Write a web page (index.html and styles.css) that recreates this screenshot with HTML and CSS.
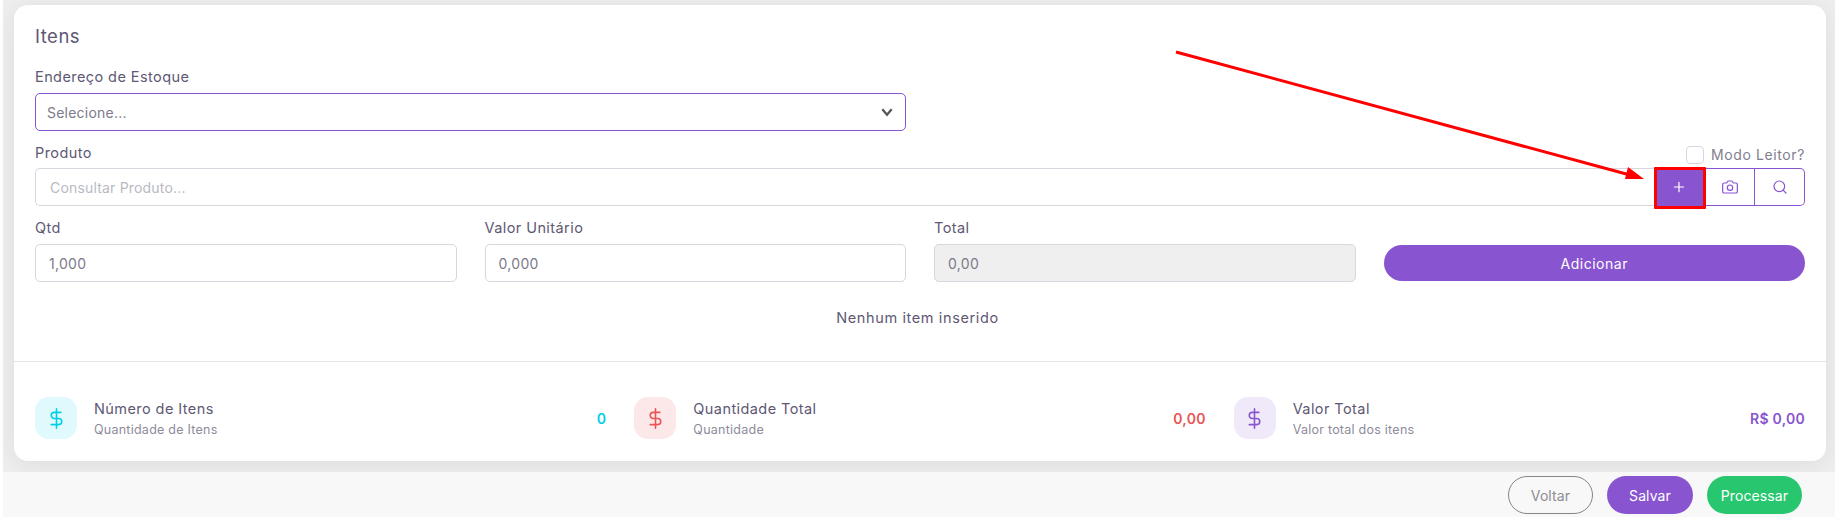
FILE: index.html
```html
<!DOCTYPE html>
<html lang="pt-BR">
<head>
<meta charset="utf-8">
<title>Itens</title>
<link rel="stylesheet" href="styles.css">
</head>
<body>
<main class="main">
  <section class="card">
    <div class="form">
      <h2 class="title">Itens</h2>
      <label class="label">Endereço de Estoque</label>
      <div class="select-row">
        <div class="control select">
          <span>Selecione...</span>
          <svg class="chev" viewBox="0 0 24 24"><path d="M5 8l7 8 7-8"/></svg>
        </div>
      </div>
      <div class="product-head">
        <label class="label">Produto</label>
        <div class="reader"><span class="check"></span><span>Modo Leitor?</span></div>
      </div>
      <div class="product">
        <div class="product-input">Consultar Produto...</div>
        <button class="pbtn plus"><svg class="ico" viewBox="0 0 24 24"><path d="M12 5v14M5 12h14"/></svg></button>
        <button class="pbtn"><svg class="ico" viewBox="0 0 24 24"><path d="M23 19a2 2 0 0 1-2 2H3a2 2 0 0 1-2-2V8a2 2 0 0 1 2-2h4l2-3h6l2 3h4a2 2 0 0 1 2 2z"/><circle cx="12" cy="13" r="4"/></svg></button>
        <button class="pbtn"><svg class="ico" viewBox="0 0 24 24"><circle cx="11" cy="11" r="8"/><path d="M21 21l-4.35-4.35"/></svg></button>
      </div>
      <div class="row">
        <div class="field"><label class="label">Qtd</label><div class="control">1,000</div></div>
        <div class="field"><label class="label">Valor Unitário</label><div class="control">0,000</div></div>
        <div class="field"><label class="label">Total</label><div class="control disabled">0,00</div></div>
        <div class="field end"><button class="add">Adicionar</button></div>
      </div>
      <p class="empty">Nenhum item inserido</p>
    </div>
    <div class="stats">
      <div class="stat">
        <span class="badge cyan"><svg class="ico big" viewBox="0 0 24 24"><path d="M12 1v22M17 5H9.5a3.5 3.5 0 0 0 0 7h5a3.5 3.5 0 0 1 0 7H6"/></svg></span>
        <div class="stat-text"><div class="stat-title">Número de Itens</div><div class="stat-sub">Quantidade de Itens</div></div>
        <strong class="value c-cyan">0</strong>
      </div>
      <div class="stat">
        <span class="badge red"><svg class="ico big" viewBox="0 0 24 24"><path d="M12 1v22M17 5H9.5a3.5 3.5 0 0 0 0 7h5a3.5 3.5 0 0 1 0 7H6"/></svg></span>
        <div class="stat-text"><div class="stat-title">Quantidade Total</div><div class="stat-sub">Quantidade</div></div>
        <strong class="value c-red">0,00</strong>
      </div>
      <div class="stat">
        <span class="badge purple"><svg class="ico big" viewBox="0 0 24 24"><path d="M12 1v22M17 5H9.5a3.5 3.5 0 0 0 0 7h5a3.5 3.5 0 0 1 0 7H6"/></svg></span>
        <div class="stat-text"><div class="stat-title">Valor Total</div><div class="stat-sub">Valor total dos itens</div></div>
        <strong class="value c-purple">R$ 0,00</strong>
      </div>
    </div>
  </section>
</main>
<footer class="footer">
  <button class="fbtn ghost">Voltar</button>
  <button class="fbtn save">Salvar</button>
  <button class="fbtn go">Processar</button>
</footer>
<div class="redbox"></div>
<svg class="arrow" viewBox="0 0 1835 517"><path class="shaft" d="M1176 52L1630 175"/><path class="head" d="M1644 179L1628 167L1625 179z"/></svg>
</body>
</html>
```
FILE: styles.css
```css
* { box-sizing: border-box; }
html, body { margin: 0; height: 517px; overflow: hidden; }
body {
  position: relative;
  padding-left: 3px;
  background: #fff;
  font-family: Inter, "Noto Sans", sans-serif;
  font-size: 14px;
  color: #5e5873;
}
.main { height: 472px; padding: 5px 9px 0 11px; background: #eeeeee; }
.card {
  height: 456px;
  background: #fff;
  border-radius: 14px;
  box-shadow: 0 4px 24px rgba(34, 41, 47, .08);
}
.form { height: 357px; padding: 20px 21px 0; border-bottom: 1px solid #e2e2e8; }
.title { margin: 0 0 20px; font-size: 18.5px; line-height: 22px; font-weight: 400; letter-spacing: .5px; }
.label { display: block; height: 20px; line-height: 20px; font-size: 14.5px; letter-spacing: .42px; }
.select-row { margin-top: 6px; padding-right: 899px; }
.control {
  display: flex;
  align-items: center;
  height: 38px;
  padding: 0 13px;
  border: 1px solid #d8d6de;
  border-radius: 5px;
  background: #fff;
  color: #7d7a8a;
  letter-spacing: .3px;
}
.select { justify-content: space-between; padding: 0 11px; border-color: #8854d0; }
.select span { letter-spacing: .22px; }
.chev { width: 16px; height: 16px; margin-right: -1px; fill: none; stroke: #555; stroke-width: 3.4; }
.product-head { display: flex; justify-content: space-between; margin-top: 15px; height: 22px; }
.product-head .label { margin-top: -3px; }
.reader { display: flex; align-items: flex-start; gap: 7px; line-height: 18px; color: #82808e; letter-spacing: .6px; }
.check { width: 18px; height: 18px; border: 1px solid #d8d6de; border-radius: 4px; background: #fff; }
.product { display: flex; height: 38px; }
.product-input {
  flex: 1;
  display: flex;
  align-items: center;
  padding: 0 14px;
  border: 1px solid #d8d6de;
  border-right: 0;
  border-radius: 5px 0 0 5px;
  color: #b9b9c3;
  letter-spacing: .18px;
}
.pbtn {
  display: flex;
  align-items: center;
  justify-content: center;
  width: 50px;
  padding: 0;
  border: 1px solid #8854d0;
  border-left: 0;
  background: #fff;
  color: #8854d0;
}
.pbtn:last-child { width: 50px; border-radius: 0 5px 5px 0; }
.pbtn.plus { background: #8854d0; color: #fff; width: 51px; }
.pbtn + .pbtn:not(.plus) { border-right: 1px solid #8854d0; }
.ico { width: 16px; height: 16px; fill: none; stroke: currentColor; stroke-width: 1.8; stroke-linecap: round; stroke-linejoin: round; }
.ico.big { width: 21px; height: 21px; stroke-width: 1.8; }
.row { display: grid; grid-template-columns: repeat(4, 1fr); gap: 28px; margin-top: 12px; }
.field .label { margin-bottom: 6px; }
.field.end { display: flex; align-items: flex-end; padding-bottom: 1px; }
.disabled { background: #efefef; }
.add {
  width: 100%;
  height: 36px;
  border: 0;
  border-radius: 18px;
  background: #8854d0;
  color: #fff;
  font: inherit;
  letter-spacing: .5px;
}
.empty { margin: 26px 0 0; padding-right: 5px; text-align: center; font-size: 14.5px; line-height: 20px; letter-spacing: .62px; }
.stats { display: grid; grid-template-columns: repeat(3, 1fr); gap: 28px; padding: 35px 21px 0; }
.stat { display: flex; align-items: center; height: 42px; }
.badge { display: flex; align-items: center; justify-content: center; flex: none; width: 42px; height: 42px; border-radius: 14px; margin-right: 17px; }
.cyan { background: #e0f9fc; color: #00cfe8; }
.red { background: #fce8e8; color: #ea5455; }
.purple { background: #f0e9fa; color: #8854d0; }
.stat-text { flex: 1; }
.stat-title { font-size: 14.5px; line-height: 20px; letter-spacing: .42px; }
.stat-sub { margin-top: 2px; font-size: 12.5px; line-height: 18px; color: #8d8b99; letter-spacing: .25px; margin-bottom: -2px; }
.value { font-size: 14px; font-weight: 600; letter-spacing: .25px; }
.c-cyan { color: #00cfe8; }
.c-red { color: #ea5455; }
.c-purple { color: #8854d0; }
.footer { display: flex; justify-content: flex-end; align-items: flex-start; gap: 14px; height: 45px; padding: 4px 33px 0 0; background: #f8f8f8; }
.fbtn { height: 38px; border-radius: 19px; border: 0; color: #fff; font: inherit; letter-spacing: .1px; padding: 0; }
.ghost { width: 85px; background: transparent; border: 1px solid #82868b; color: #8d8d95; }
.save { width: 86px; background: #8854d0; }
.go { width: 95px; background: #28c76f; }
.redbox { position: absolute; left: 1654px; top: 167px; width: 52px; height: 42px; border: 3px solid #ff0000; border-radius: 1px; }
.arrow { position: absolute; left: 0; top: 0; width: 1835px; height: 517px; pointer-events: none; }
.shaft { stroke: #ff0000; stroke-width: 3; fill: none; }
.head { fill: #ff0000; }
```
